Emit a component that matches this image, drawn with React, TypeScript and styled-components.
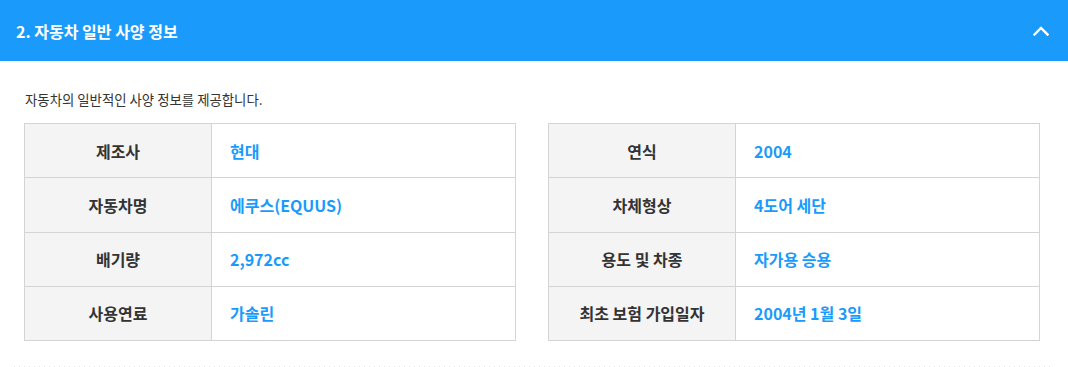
import React from "react";
import styled, { createGlobalStyle } from "styled-components";

const GlobalStyle = createGlobalStyle`
  html, body { margin: 0; padding: 0; background: #fff; }
  body {
    font-family: "Noto Sans CJK KR", "Noto Sans", sans-serif;
    color: #333;
  }
  * { box-sizing: border-box; }
`;

const Section = styled.section`
  width: 1068px;
`;

const Header = styled.header`
  height: 61px;
  background: #1a9bfc;
  display: flex;
  align-items: center;
  justify-content: space-between;
  padding: 0 18px 0 16px;
`;

const Title = styled.h2`
  margin: 0;
  font-size: 16px;
  font-weight: 700;
  color: #fff;
`;

const ToggleButton = styled.button`
  border: 0;
  background: transparent;
  padding: 0;
  width: 18px;
  height: 18px;
  display: flex;
  align-items: center;
  justify-content: center;
  cursor: pointer;
`;

const Body = styled.div`
  padding: 29px 28px 0 24px;
`;

const Description = styled.p`
  margin: 0 0 14px 1px;
  font-size: 13.4px;
  line-height: 19px;
  color: #333;
`;

const Tables = styled.div`
  display: grid;
  grid-template-columns: 1fr 1fr;
  gap: 32px;
`;

const SpecTable = styled.table`
  width: 100%;
  border-collapse: collapse;
  table-layout: fixed;
  border: 1px solid #d4d4d4;
`;

const Row = styled.tr`
  height: 54.25px;
  border-top: 1px solid #d4d4d4;
  &:first-child { border-top: 0; }
`;

const Label = styled.th`
  width: 187px;
  background: #f4f4f4;
  border-right: 1px solid #d4d4d4;
  font-size: 16px;
  font-weight: 700;
  color: #333;
  text-align: center;
  padding: 0;
`;

const Value = styled.td`
  padding: 0 0 0 18px;
  font-size: 16px;
  font-weight: 700;
  color: #1a9bfc;
`;

const Divider = styled.div`
  margin: 25px 16px 0 14px;
  height: 1px;
  background-image: linear-gradient(to right, #e4e4e4 1px, transparent 1px);
  background-size: 5px 1px;
`;

type Spec = { label: string; value: string };

const left: Spec[] = [
  { label: "제조사", value: "현대" },
  { label: "자동차명", value: "에쿠스(EQUUS)" },
  { label: "배기량", value: "2,972cc" },
  { label: "사용연료", value: "가솔린" },
];

const right: Spec[] = [
  { label: "연식", value: "2004" },
  { label: "차체형상", value: "4도어 세단" },
  { label: "용도 및 차종", value: "자가용 승용" },
  { label: "최초 보험 가입일자", value: "2004년 1월 3일" },
];

const SpecList = ({ items }: { items: Spec[] }) => (
  <SpecTable>
    <tbody>
      {items.map((s) => (
        <Row key={s.label}>
          <Label scope="row">{s.label}</Label>
          <Value>{s.value}</Value>
        </Row>
      ))}
    </tbody>
  </SpecTable>
);

export default function App() {
  return (
    <>
      <GlobalStyle />
      <Section>
        <Header>
          <Title>2. 자동차 일반 사양 정보</Title>
          <ToggleButton aria-label="접기">
            <svg width="16" height="10" viewBox="0 0 16 10" fill="none">
              <path d="M1.5 8.5 L8 2 L14.5 8.5" stroke="#fff" strokeWidth="2.4" strokeLinecap="square" />
            </svg>
          </ToggleButton>
        </Header>
        <Body>
          <Description>자동차의 일반적인 사양 정보를 제공합니다.</Description>
          <Tables>
            <SpecList items={left} />
            <SpecList items={right} />
          </Tables>
        </Body>
        <Divider />
      </Section>
    </>
  );
}
